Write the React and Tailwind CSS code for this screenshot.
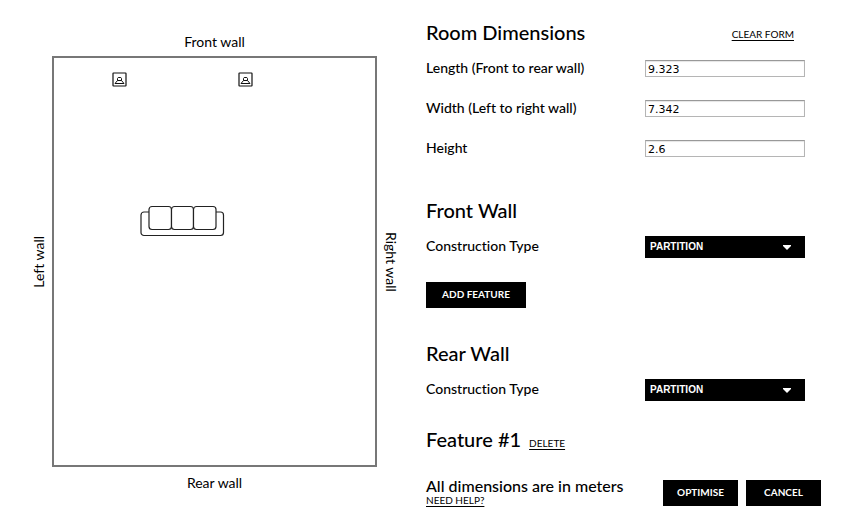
import React, { useState } from "react";

const emptyRoom = { length: "", width: "", height: "" };

const fields = [
  { name: "length", label: "Length (Front to rear wall)" },
  { name: "width", label: "Width (Left to right wall)" },
  { name: "height", label: "Height" },
];

const Speaker = () => (
  <svg width="15" height="15" viewBox="0 0 15 15" fill="none" stroke="#111" aria-hidden="true">
    <rect x="1" y="1" width="13" height="13" rx="0.5" strokeWidth="1.2" />
    <path d="M5.5 8.5v-2l.7-1h2.6l.7 1v2zM5.5 8.5 3 11.5h9L9.5 8.5" />
  </svg>
);

const Sofa = () => (
  <svg
    width="85"
    height="32"
    viewBox="0 0 85 32"
    fill="#fff"
    stroke="#222"
    strokeWidth="1.2"
    aria-hidden="true"
  >
    <rect x="1" y="7" width="82.5" height="23.5" rx="3" />
    <rect x="9" y="1.5" width="22.5" height="23" rx="3" />
    <rect x="31.5" y="1.5" width="22" height="23" rx="3" />
    <rect x="53.5" y="1.5" width="22.5" height="23" rx="3" />
  </svg>
);

const RoomPlan = () => (
  <section className="flex-1 min-w-0 pt-[34px] pl-[30px] pr-[27px] text-sm leading-4">
    <p className="pb-1.5 text-center">Front wall</p>
    <div className="flex items-center">
      <p className="w-[22px] pr-px flex justify-center [writing-mode:vertical-rl] rotate-180">
        Left wall
      </p>
      <div className="relative flex-1 aspect-[325/411] border-2 border-[#777]">
        <div className="absolute left-[18%] top-[3.5%]">
          <Speaker />
        </div>
        <div className="absolute left-[57.3%] top-[3.5%]">
          <Speaker />
        </div>
        <div className="absolute left-[26.8%] top-[36%]">
          <Sofa />
        </div>
      </div>
      <p className="w-[22px] flex justify-center [writing-mode:vertical-rl]">
        Right wall
      </p>
    </div>
    <p className="pt-2 text-center">Rear wall</p>
  </section>
);

const ConstructionType = ({ id }) => (
  <div className="flex h-10 items-center justify-between pr-4">
    <label htmlFor={id} className="text-sm font-medium">
      Construction Type
    </label>
    <div className="relative w-40 pt-0.5">
      <select
        id={id}
        className="block h-[22px] w-full appearance-none bg-black pb-0.5 pl-[5px] font-['Liberation_Sans',sans-serif] text-[10px] font-bold text-white"
      >
        <option>PARTITION</option>
      </select>
      <svg
        className="pointer-events-none absolute right-3.5 top-[11px]"
        width="8"
        height="5"
        viewBox="0 0 8 5"
        fill="#fff"
        aria-hidden="true"
      >
        <path d="M0 0h8v1L4 5 0 1z" />
      </svg>
    </div>
  </div>
);

const buttonStyle = "h-[26px] bg-black pb-0.5 text-[10px] font-bold text-white";
const linkStyle = "text-[10px] leading-3 underline underline-offset-2";
const headingStyle = "flex h-[30px] items-center pb-0.5 text-xl font-medium";

const App = () => {
  const [room, setRoom] = useState({ length: "9.323", width: "7.342", height: "2.6" });
  const [hasFeature, setHasFeature] = useState(true);

  const handleChange = (e) => {
    setRoom({ ...room, [e.target.name]: e.target.value });
  };

  return (
    <div className="flex min-h-screen bg-white font-['Lato',sans-serif] text-black [font-variant-ligatures:none]">
      <RoomPlan />

      <form
        className="w-[419px] shrink-0 pt-[18px] pr-6"
        onSubmit={(e) => e.preventDefault()}
      >
        <div className="flex items-center justify-between pr-[27px]">
          <h2 className={headingStyle}>Room Dimensions</h2>
          <button
            type="button"
            className={`${linkStyle} pt-0.5`}
            onClick={() => setRoom(emptyRoom)}
          >
            CLEAR FORM
          </button>
        </div>
        {fields.map((field) => (
          <div key={field.name} className="flex h-10 items-center justify-between pr-4">
            <label htmlFor={field.name} className="text-sm font-medium">
              {field.label}
            </label>
            <input
              id={field.name}
              name={field.name}
              type="text"
              value={room[field.name]}
              onChange={handleChange}
              className="h-[17px] w-40 border border-[#b5b5b5] border-t-[#999] px-0.5 pt-0.5 font-['DejaVu_Sans',sans-serif] text-[11px] shadow-[inset_0_1px_1px_#e5e5e5]"
            />
          </div>
        ))}

        <h2 className={`${headingStyle} mt-7`}>Front Wall</h2>
        <ConstructionType id="front-type" />
        <button
          type="button"
          className={`${buttonStyle} mt-4 block w-[100px]`}
          onClick={() => setHasFeature(true)}
        >
          ADD FEATURE
        </button>

        <h2 className={`${headingStyle} mt-[31px]`}>Rear Wall</h2>
        <ConstructionType id="rear-type" />
        {hasFeature && (
          <div className="mt-4 flex items-center gap-2">
            <h2 className={headingStyle}>Feature #1</h2>
            <button
              type="button"
              className={`${linkStyle} pt-1.5`}
              onClick={() => setHasFeature(false)}
            >
              DELETE
            </button>
          </div>
        )}

        <div className="mt-[25px] flex items-start justify-between">
          <div className="flex flex-col items-start gap-0.5">
            <p className="text-base leading-3 font-medium">All dimensions are in meters</p>
            <a href="#help" className={linkStyle}>
              NEED HELP?
            </a>
          </div>
          <div className="flex gap-2">
            <button type="submit" className={`${buttonStyle} w-[75px]`}>
              OPTIMISE
            </button>
            <button type="button" className={`${buttonStyle} w-[75px]`}>
              CANCEL
            </button>
          </div>
        </div>
      </form>
    </div>
  );
};

export default App;
